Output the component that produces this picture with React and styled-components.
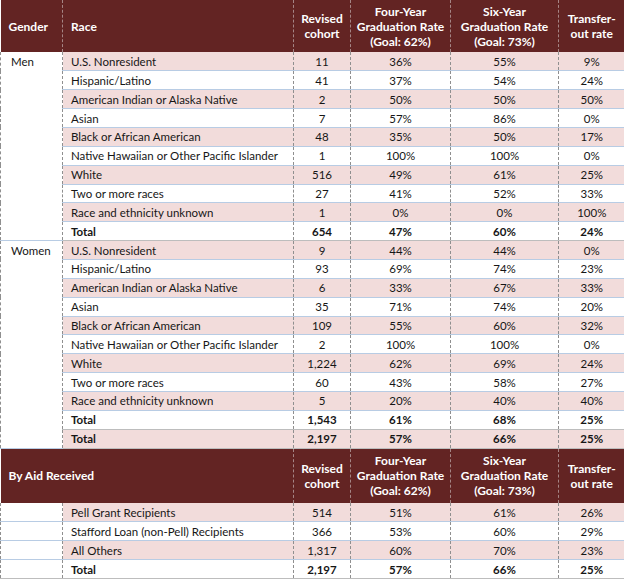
import React from 'react'
import styled, { createGlobalStyle } from 'styled-components'

const races = [
    'U.S. Nonresident',
    'Hispanic/Latino',
    'American Indian or Alaska Native',
    'Asian',
    'Black or African American',
    'Native Hawaiian or Other Pacific Islander',
    'White',
    'Two or more races',
    'Race and ethnicity unknown',
]

const men = [
    ['11', '36%', '55%', '9%'],
    ['41', '37%', '54%', '24%'],
    ['2', '50%', '50%', '50%'],
    ['7', '57%', '86%', '0%'],
    ['48', '35%', '50%', '17%'],
    ['1', '100%', '100%', '0%'],
    ['516', '49%', '61%', '25%'],
    ['27', '41%', '52%', '33%'],
    ['1', '0%', '0%', '100%'],
]

const women = [
    ['9', '44%', '44%', '0%'],
    ['93', '69%', '74%', '23%'],
    ['6', '33%', '67%', '33%'],
    ['35', '71%', '74%', '20%'],
    ['109', '55%', '60%', '32%'],
    ['2', '100%', '100%', '0%'],
    ['1,224', '62%', '69%', '24%'],
    ['60', '43%', '58%', '27%'],
    ['5', '20%', '40%', '40%'],
]

const aid = [
    ['Pell Grant Recipients', '514', '51%', '61%', '26%'],
    ['Stafford Loan (non-Pell) Recipients', '366', '53%', '60%', '29%'],
    ['All Others', '1,317', '60%', '70%', '23%'],
]

function Header({ first }) {
    return (
        <HeadRow $height={first ? 52 : 55}>
            {first ? (
                <>
                    <HeadCell>Gender</HeadCell>
                    <HeadCell>Race</HeadCell>
                </>
            ) : (
                <HeadCell colSpan={2}>By Aid Received</HeadCell>
            )}
            <HeadCell $center>Revised<br />cohort</HeadCell>
            <HeadCell $center>Four-Year<br />Graduation Rate<br />(Goal: 62%)</HeadCell>
            <HeadCell $center>Six-Year<br />Graduation Rate<br />(Goal: 73%)</HeadCell>
            <HeadCell $center>Transfer-<br />out rate</HeadCell>
        </HeadRow>
    )
}

function Values({ label, values, bold }) {
    return (
        <>
            <Cell $bold={bold}>{label}</Cell>
            {values.map((v, i) => (
                <Cell key={i} $center $bold={bold}>{v}</Cell>
            ))}
        </>
    )
}

function GenderBlock({ name, data, total, grandTotal }) {
    const span = grandTotal ? 11 : 10
    return (
        <>
            {data.map((values, i) => (
                <Row key={i} $pink={i % 2 === 0}>
                    {i === 0 && <GenderCell rowSpan={span}>{name}</GenderCell>}
                    <Values label={races[i]} values={values} />
                </Row>
            ))}
            <Row $grey>
                <Values label="Total" values={total} bold />
            </Row>
            {grandTotal && (
                <Row $pink $grey>
                    <Values label="Total" values={grandTotal} bold />
                </Row>
            )}
        </>
    )
}

export default function App() {
    return (
        <>
            <GlobalStyle />
            <Table>
                <colgroup>
                    <col style={{ width: 62 }} />
                    <col style={{ width: 231 }} />
                    <col style={{ width: 57 }} />
                    <col style={{ width: 100 }} />
                    <col style={{ width: 108 }} />
                    <col style={{ width: 66 }} />
                </colgroup>
                <tbody>
                    <Header first />
                    <GenderBlock name="Men" data={men} total={['654', '47%', '60%', '24%']} />
                    <GenderBlock
                        name="Women"
                        data={women}
                        total={['1,543', '61%', '68%', '25%']}
                        grandTotal={['2,197', '57%', '66%', '25%']}
                    />
                    <Header />
                    {aid.map(([label, ...values], i) => (
                        <Row key={label} $pink={i % 2 === 0}>
                            <EmptyCell />
                            <Values label={label} values={values} />
                        </Row>
                    ))}
                    <Row $grey>
                        <EmptyCell />
                        <Values label="Total" values={['2,197', '57%', '66%', '25%']} bold />
                    </Row>
                </tbody>
            </Table>
        </>
    )
}

const GlobalStyle = createGlobalStyle`
    body {
        margin: 0;
        background: #fff;
        font-family: Lato, "Open Sans", sans-serif;
    }
`

const Table = styled.table`
    width: 624px;
    table-layout: fixed;
    border-collapse: collapse;
    font-size: 11.5px;
    color: #161616;
`

const HeadRow = styled.tr`
    height: ${p => p.$height}px;
    background: #632423;
`

const HeadCell = styled.td`
    color: #fff;
    font-weight: 700;
    font-size: 12px;
    line-height: 15px;
    text-align: ${p => (p.$center ? 'center' : 'left')};
    padding: 0 ${p => (p.$center ? '1px' : '8px')};
    vertical-align: middle;
    white-space: nowrap;
    border-left: 1px dashed #a58585;
    &:first-child {
        border-left: none;
    }
`

const Row = styled.tr`
    height: 18.86px;
    background: ${p => (p.$pink ? '#f2dcdb' : '#fff')};
    border-bottom: 1px solid ${p => (p.$grey ? '#bdbdbd' : '#b8cce4')};
`

const Cell = styled.td`
    padding: 0 ${p => (p.$center ? '2px' : '8px')};
    text-align: ${p => (p.$center ? 'center' : 'left')};
    font-weight: ${p => (p.$bold ? 700 : 400)};
    white-space: nowrap;
    vertical-align: middle;
    border-left: 1px dashed #8f8f8f;
`

const GenderCell = styled.td`
    background: #fff;
    vertical-align: top;
    padding: 3px 10px 0;
    border-left: 1px dashed #8f8f8f;
    border-bottom: 1px solid #b8cce4;
`

const EmptyCell = styled.td`
    background: #fff;
    border-left: 1px dashed #8f8f8f;
    border-bottom: 1px dashed #8f8f8f;
`
